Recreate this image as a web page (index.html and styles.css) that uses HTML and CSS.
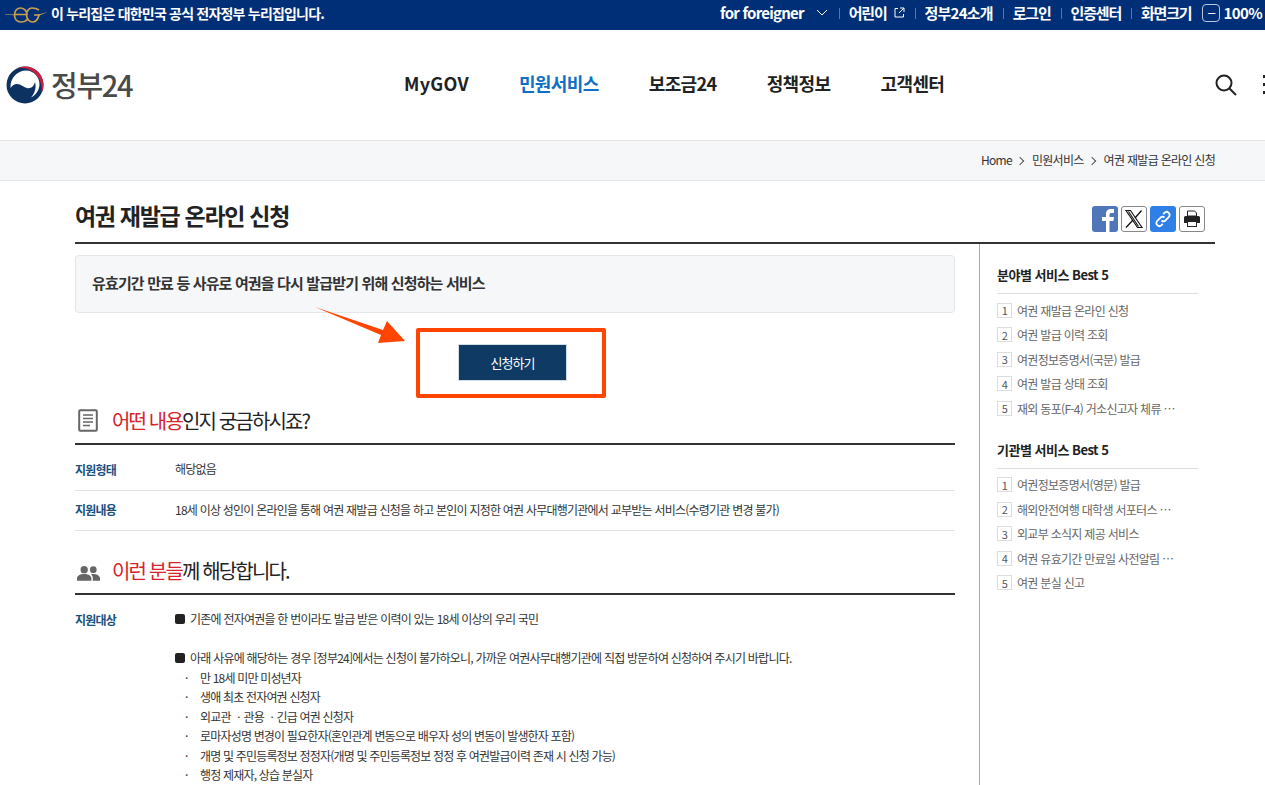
FILE: index.html
```html
<!DOCTYPE html>
<html lang="ko">
<head>
<meta charset="utf-8">
<title>여권 재발급 온라인 신청</title>
<link rel="stylesheet" href="styles.css">
</head>
<body>
<div class="topbar">
  <div class="gov">
    <svg class="eg" width="43" height="16" viewBox="0 0 43 16"><path d="M0 7.200L10 7.500 10 8.300 0 7.800zM33 7.500L43 5 33 9z" fill="#c9a04e"/><path d="M10 7.500H22C22 3 18 1 15.500 1 12 1 9.500 4 9.500 8c0 4 2.500 7 6.500 7 3 0 5-1 7-3M34 3c-3-2-5-2-7-2-3 0-5.500 3-5.500 7s3 7 6 7c3.500 0 5.500-3 6.500-7h-5" stroke="#c9a04e" stroke-width="1.700" fill="none"/></svg>
    <span>이 누리집은 대한민국 공식 전자정부 누리집입니다.</span>
  </div>
  <div class="util">
    <span class="u-item latin">for foreigner <svg class="chev" width="12" height="7" viewBox="0 0 12 7"><path d="M1 1l5 5 5-5" stroke="#fff" fill="none"/></svg></span>
    <span class="u-item">어린이 <svg class="ext" width="11" height="11" viewBox="0 0 11 11"><path d="M4 1.500H1v8.500h8.500V7M6 1h4v4M10 1L5 6" stroke="#fff" fill="none"/></svg></span>
    <span class="u-item latin">정부24소개</span>
    <span class="u-item">로그인</span>
    <span class="u-item">인증센터</span>
    <span class="u-item">화면크기</span>
    <span class="zoom"><span class="minus">−</span>100%</span>
  </div>
</div>

<header class="header">
  <div class="logo">
    <svg width="38" height="38" viewBox="0 0 38 38"><circle cx="19" cy="19" r="18.500" fill="#0b3260"/><path d="M4.500 22C4 11 12 4.500 20 4.500c8 0 13.500 6.500 13.500 13.500 0 6-3.500 11-8.500 13.500 4-4.500 5.500-10.500 4-15.500-1 4-4 7-8 6-4-1-6-4-10-4-3 0-5 2-6.500 4z" fill="#fff"/><path d="M11 2.300A18.500 18.500 0 0 1 35 28.300 21 21 0 0 0 11 2.300z" fill="#c8203f"/></svg>
    <span class="logo-text">정부24</span>
  </div>
  <nav class="gnb">
    <a class="gnb-item latin">MyGOV</a>
    <a class="gnb-item active">민원서비스</a>
    <a class="gnb-item">보조금24</a>
    <a class="gnb-item">정책정보</a>
    <a class="gnb-item">고객센터</a>
  </nav>
  <div class="tools">
    <svg width="22" height="22" viewBox="0 0 22 22"><circle cx="9" cy="9" r="7.500" stroke="#222" stroke-width="2" fill="none"/><path d="M14.500 14.500l6.500 6.500" stroke="#222" stroke-width="2"/></svg>
    <span class="dots"><i></i><i></i><i></i></span>
  </div>
</header>

<div class="crumbs">
  <span>Home</span><span class="sep"></span><span>민원서비스</span><span class="sep"></span><span>여권 재발급 온라인 신청</span>
</div>

<div class="wrap">
  <div class="title-row">
    <h1>여권 재발급 온라인 신청</h1>
    <div class="share">
      <span class="sbtn fb"><svg width="26" height="26" viewBox="0 0 26 26"><path d="M14 26V15h-4v-4h4V8c0-3.500 2-5 5-5h3v4h-2.500c-1.500 0-2 .5-2 2v2H22l-.7 4h-3.800v11z" fill="#fff"/></svg></span>
      <span class="sbtn line"><svg width="20" height="20" viewBox="0 0 20 20"><path d="M2 1.500h4.500L18 18.500h-4.500zM4.500 2.500L14.500 17.500" stroke="#111" fill="none" stroke-width="1.100"/><path d="M17.500 1.500L11 9M9 11l-7 7.500" stroke="#111" stroke-width="1.300" fill="none"/></svg></span>
      <span class="sbtn link"><svg width="20" height="20" viewBox="0 0 20 20"><path d="M8.500 11.500c1.500 1.500 3 1 4-.2l3-3c1.500-1.500 1.500-3.300.2-4.500s-3-1.200-4.300.2l-1.200 1.200M11.500 8.500C10 7 8.500 7.500 7.500 8.700l-3 3c-1.500 1.500-1.500 3.300-.2 4.500s3 1.200 4.300-.2l1.200-1.200" stroke="#fff" stroke-width="1.800" fill="none"/></svg></span>
      <span class="sbtn line"><svg width="18" height="18" viewBox="0 0 18 18"><path d="M4.500 1h7l2 2v3h-9z" fill="#fff" stroke="#222"/><path d="M2.500 6h13A1.500 1.500 0 0 1 17 7.500V13h-3v-2H4v2H1V7.500A1.500 1.500 0 0 1 2.500 6z" fill="#222"/><rect x="4.500" y="11.500" width="9" height="5" fill="#fff" stroke="#222"/></svg></span>
    </div>
  </div>

  <div class="columns">
    <main class="content">
      <div class="summary">유효기간 만료 등 사유로 여권을 다시 발급받기 위해 신청하는 서비스</div>

      <div class="apply-zone">
        <svg class="arrow" width="92" height="38" viewBox="0 0 92 38"><path d="M0 0L68 23 72 14 90 34 63 36 66 28z" fill="#ff4500"/></svg>
        <div class="highlight"><a class="apply">신청하기</a></div>
      </div>

      <h2 class="sec-title first">
        <svg width="20" height="23" viewBox="0 0 20 23"><rect x="1.200" y="1.200" width="17.600" height="20.600" rx="1" stroke="#666" stroke-width="2" fill="none"/><path d="M5 6h10M5 9.500h10M5 13h10M5 16.500h7" stroke="#666" stroke-width="1.500"/></svg>
        <span><em>어떤 내용</em>인지 궁금하시죠?</span>
      </h2>
      <div class="row tall"><div class="label">지원형태</div><div class="val">해당없음</div></div>
      <div class="row"><div class="label">지원내용</div><div class="val">18세 이상 성인이 온라인을 통해 여권 재발급 신청을 하고 본인이 지정한 여권 사무대행기관에서 교부받는 서비스(수령기관 변경 불가)</div></div>

      <h2 class="sec-title second">
        <svg class="people" width="23" height="16" viewBox="0 0 24 16"><circle cx="7.500" cy="4.500" r="3.800" fill="#666"/><circle cx="17" cy="4.500" r="3.500" fill="#666"/><path d="M0 16v-2.500C0 10.500 4 9 7.500 9S15 10.500 15 13.500V16zM16.500 16v-2.500c0-1.700-.7-3.200-2-4.200 1-.2 1.800-.3 2.500-.3 3 0 7 1.500 7 4.500V16z" fill="#666"/></svg>
        <span><em>이런 분들</em>께 해당합니다.</span>
      </h2>
      <div class="row target">
        <div class="label">지원대상</div>
        <div class="val">
          <p class="bul">기존에 전자여권을 한 번이라도 발급 받은 이력이 있는 18세 이상의 우리 국민</p>
          <p class="bul gap">아래 사유에 해당하는 경우 [정부24]에서는 신청이 불가하오니, 가까운 여권사무대행기관에 직접 방문하여 신청하여 주시기 바랍니다.</p>
          <ul class="sub">
            <li>만 18세 미만 미성년자</li>
            <li>생애 최초 전자여권 신청자</li>
            <li>외교관 ㆍ관용 ㆍ긴급 여권 신청자</li>
            <li>로마자성명 변경이 필요한자(혼인관계 변동으로 배우자 성의 변동이 발생한자 포함)</li>
            <li>개명 및 주민등록정보 정정자(개명 및 주민등록정보 정정 후 여권발급이력 존재 시 신청 가능)</li>
            <li>행정 제재자, 상습 분실자</li>
          </ul>
        </div>
      </div>
    </main>

    <aside class="side">
      <h3>분야별 서비스 Best 5</h3>
      <ol class="best">
        <li><b>1</b><span>여권 재발급 온라인 신청</span></li>
        <li><b>2</b><span>여권 발급 이력 조회</span></li>
        <li><b>3</b><span>여권정보증명서(국문) 발급</span></li>
        <li><b>4</b><span>여권 발급 상태 조회</span></li>
        <li><b>5</b><span>재외 동포(F-4) 거소신고자 체류 …</span></li>
      </ol>
      <h3>기관별 서비스 Best 5</h3>
      <ol class="best">
        <li><b>1</b><span>여권정보증명서(영문) 발급</span></li>
        <li><b>2</b><span>해외안전여행 대학생 서포터스 …</span></li>
        <li><b>3</b><span>외교부 소식지 제공 서비스</span></li>
        <li><b>4</b><span>여권 유효기간 만료일 사전알림 …</span></li>
        <li><b>5</b><span>여권 분실 신고</span></li>
      </ol>
    </aside>
  </div>
</div>
</body>
</html>
```

FILE: styles.css
```css
* { box-sizing: border-box; }
html, body { margin: 0; padding: 0; height: 785px; overflow: hidden; background: #fff; }
body { font-family: "Noto Sans CJK KR", "Noto Sans", sans-serif; color: #222; font-size: 12px; letter-spacing: -0.6px; }
h1, h2, h3, p, ul, ol { margin: 0; padding: 0; list-style: none; }
em { font-style: normal; color: #d8222b; }

.topbar { height: 30px; background: #002f77; color: #fff; display: flex; justify-content: space-between; align-items: center; padding: 0 3px 5px 5px; font-size: 14px; font-weight: 700; letter-spacing: -0.8px; white-space: nowrap; }
.gov { display: flex; align-items: center; gap: 3px; }
.eg { margin-top: 5px; }
.util { display: flex; align-items: center; font-size: 15px; letter-spacing: -1.2px; }
.u-item { display: flex; align-items: center; gap: 5px; padding: 0 10px; position: relative; }
.u-item.latin { letter-spacing: -0.78px; }
.u-item + .u-item::before { content: ""; position: absolute; left: 0; top: 6px; height: 11px; width: 1px; background: #5577a8; }
.chev { margin-left: 7px; margin-right: 1px; }
.ext { margin-left: 2px; }
.zoom { display: flex; align-items: center; gap: 3px; padding-left: 1px; letter-spacing: -0.6px; }
.minus { width: 18px; height: 18px; border: 1px solid #b9c6dc; border-radius: 4px; display: flex; align-items: center; justify-content: center; font-weight: 400; line-height: 1; }

.header { height: 110px; display: flex; align-items: center; padding: 0 0 4px 6px; position: relative; }
.logo { display: flex; align-items: center; gap: 7px; width: 398px; margin-top: 3px; }
.logo-text { font-size: 29px; font-weight: 500; color: #4a4a4a; letter-spacing: -1.3px; line-height: 1; }
.gnb { display: flex; gap: 50px; font-size: 18px; font-weight: 700; color: #222; letter-spacing: -0.6px; }
.gnb-item.latin { letter-spacing: 0.3px; }
.gnb-item.active { color: #0f6fc6; }
.tools { display: flex; align-items: center; gap: 26px; margin-left: auto; margin-top: 3px; width: 50px; flex: none; }
.tools svg { flex: none; }
.dots { display: flex; flex-direction: column; gap: 5px; flex: none; }
.dots i { display: block; width: 3px; height: 3px; background: #222; }

.crumbs { height: 41px; background: #f6f7f9; border-top: 1px solid #e3e3e3; border-bottom: 1px solid #e6e6e6; display: flex; justify-content: flex-end; align-items: center; padding: 0 50px 2px 0; font-size: 12px; letter-spacing: -0.7px; color: #333; }
.sep { width: 6px; height: 6px; border-top: 1px solid #555; border-right: 1px solid #555; transform: rotate(45deg); margin: 2px 9px 0 5px; }

.wrap { padding: 0 50px 0 75px; }
.title-row { height: 63px; display: flex; justify-content: space-between; align-items: flex-end; border-bottom: 2px solid #333; padding: 0 10px 10px 0; }
h1 { font-size: 23px; font-weight: 700; color: #222; letter-spacing: -1.3px; line-height: 34px; }
.share { display: flex; gap: 3px; }
.sbtn { width: 26px; height: 26px; border-radius: 3px; display: flex; align-items: center; justify-content: center; overflow: hidden; }
.fb { background: #4f76b8; }
.line { border: 1px solid #888; background: #fff; }
.link { background: #2f7fe6; }

.columns { display: flex; }
.content { width: 880px; flex: none; padding-top: 11px; }
.summary { height: 58px; background: #f6f7f9; border: 1px solid #e5e6e8; border-radius: 4px; display: flex; align-items: center; padding: 0 0 4px 16px; font-size: 15px; letter-spacing: -0.85px; font-weight: 700; color: #333; }
.apply-zone { display: flex; justify-content: center; padding: 15px 8px 0 0; position: relative; }
.arrow { position: absolute; left: 240px; top: -6px; }
.highlight { width: 190px; height: 70px; border: 4px solid #ff4500; border-radius: 2px; display: flex; align-items: center; justify-content: center; padding: 0 0 2px 3px; }
.apply { width: 109px; height: 37px; background: #0e3a63; color: #fff; font-size: 13px; letter-spacing: -1px; display: flex; align-items: center; justify-content: center; border: 1px solid #d5dde5; }

.sec-title { display: flex; align-items: center; gap: 14px; border-bottom: 2px solid #333; font-size: 20px; font-weight: 400; letter-spacing: -1.85px; height: 47px; padding: 0 0 0 3px; color: #222; }
.sec-title.second { margin-top: 17px; padding-left: 2px; gap: 12px; }
.people { margin-top: 4px; }
.row { display: flex; border-bottom: 1px solid #e3e3e3; height: 40px; align-items: center; padding-bottom: 2px; letter-spacing: -0.77px; }
.row.tall { height: 46px; padding: 3px 0 0; }
.row.target { border: 0; height: auto; align-items: flex-start; padding: 14px 0 0; }
.target .label { line-height: 21px; }
.label { width: 100px; flex: none; color: #1a4f80; font-weight: 700; font-size: 12px; }
.val { color: #333; font-size: 12px; line-height: 19.500px; }
.bul { position: relative; padding-left: 15px; }
.bul::before { content: ""; position: absolute; left: 0; top: 5px; width: 10px; height: 10px; background: #222; border-radius: 2px; }
.bul.gap { margin-top: 19.500px; }
.sub { letter-spacing: -0.82px; }
.sub li { position: relative; padding-left: 25px; }
.sub li::before { content: "·"; position: absolute; left: 10px; }

.side { flex: 1; border-left: 1px solid #aaa; margin-left: 24px; padding: 22px 17px 0 17px; height: 542px; }
.side h3 { font-size: 13px; font-weight: 700; color: #222; height: 28px; border-bottom: 1px solid #ddd; line-height: 18px; letter-spacing: -0.5px; }
.best { padding-top: 4px; margin-bottom: 20px; }
.best li { display: flex; align-items: center; height: 24.500px; color: #666; font-size: 12px; letter-spacing: -0.7px; white-space: nowrap; }
.best b { width: 15px; height: 15px; border: 1px solid #ddd; font-weight: 400; color: #555; font-size: 11px; display: flex; align-items: center; justify-content: center; margin-right: 5px; flex: none; }
```
